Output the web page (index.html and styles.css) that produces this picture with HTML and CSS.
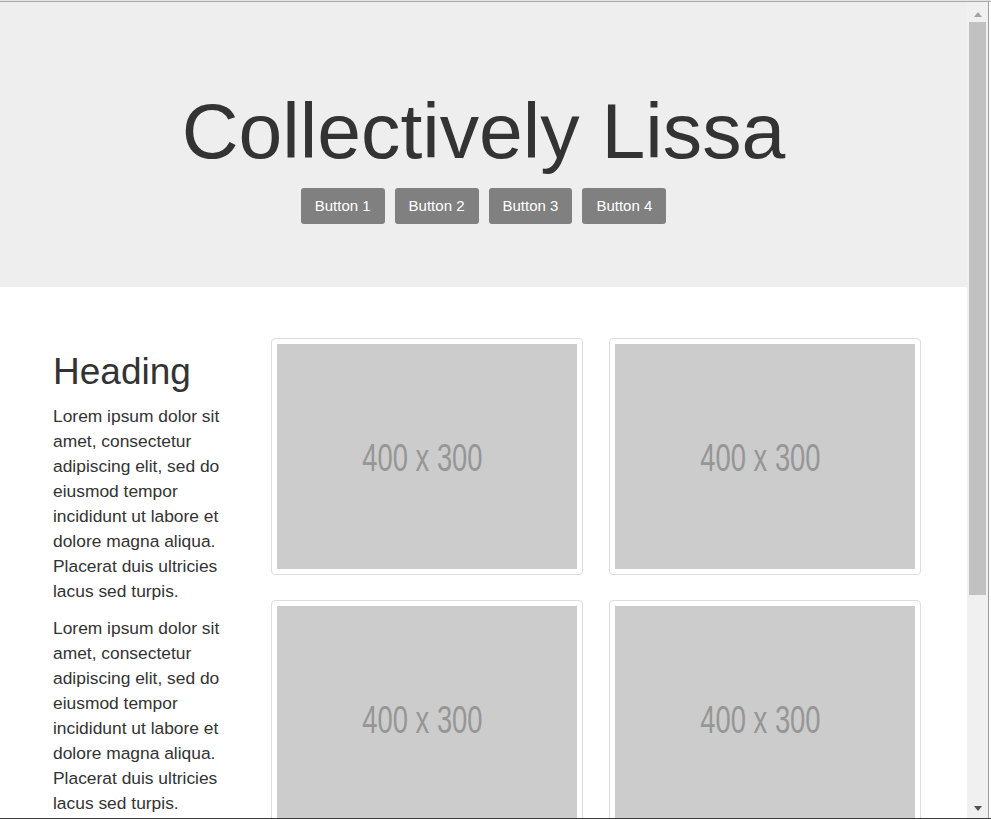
FILE: index.html
```html
<!DOCTYPE html>
<html>
<head>
<meta charset="utf-8">
<title>Collectively Lissa</title>
<link rel="stylesheet" href="styles.css">
</head>
<body>
<div class="topline"></div>
<div class="topborder"></div>
<div class="frame">
  <div class="page">
    <header class="hero">
      <h1 class="hero-title">Collectively Lissa</h1>
      <div class="hero-buttons">
        <a class="btn">Button 1</a>
        <a class="btn">Button 2</a>
        <a class="btn">Button 3</a>
        <a class="btn">Button 4</a>
      </div>
    </header>
    <section class="content">
      <div class="sidebar">
        <h2 class="sidebar-heading">Heading</h2>
        <p class="sidebar-text">Lorem ipsum dolor sit amet, consectetur adipiscing elit, sed do eiusmod tempor incididunt ut labore et dolore magna aliqua. Placerat duis ultricies lacus sed turpis.</p>
        <p class="sidebar-text">Lorem ipsum dolor sit amet, consectetur adipiscing elit, sed do eiusmod tempor incididunt ut labore et dolore magna aliqua. Placerat duis ultricies lacus sed turpis.</p>
      </div>
      <div class="gallery">
        <div class="thumb"><div class="placeholder"><span class="ph-text">400 x 300</span></div></div>
        <div class="thumb"><div class="placeholder"><span class="ph-text">400 x 300</span></div></div>
        <div class="thumb"><div class="placeholder"><span class="ph-text">400 x 300</span></div></div>
        <div class="thumb"><div class="placeholder"><span class="ph-text">400 x 300</span></div></div>
      </div>
    </section>
  </div>
  <div class="scrollbar">
    <div class="sb-arrow sb-up"></div>
    <div class="sb-thumb"></div>
    <div class="sb-fill"></div>
    <div class="sb-arrow sb-down"></div>
  </div>
  <div class="edge"></div>
  <div class="rest"></div>
</div>
<div class="bottomline"></div>
</body>
</html>
```
FILE: styles.css
```css
html, body {
  margin: 0;
  padding: 0;
  height: 819px;
  overflow: hidden;
  background: #ffffff;
  font-family: "Liberation Sans", Arial, sans-serif;
  color: #333333;
}

.topline {
  height: 1px;
  background: #e4e4e4;
}

.topborder {
  height: 1px;
  background: #a8a8a8;
}

.frame {
  display: flex;
  height: 816px;
}

.bottomline {
  height: 1px;
  background: #3c3c3c;
}

.page {
  width: 967px;
  flex: none;
  overflow: hidden;
}

.hero {
  background: #eeeeee;
  height: 285px;
  box-sizing: border-box;
  padding-top: 85px;
  text-align: center;
}

.hero-title {
  margin: 0;
  font-size: 78.7px;
  font-weight: normal;
  line-height: 88px;
  color: #333333;
}

.hero-buttons {
  display: flex;
  justify-content: center;
  gap: 10px;
  margin-top: 13px;
}

.btn {
  display: block;
  background: #808080;
  color: #ffffff;
  font-size: 15px;
  line-height: 20px;
  padding: 8px 14px;
  border-radius: 3px;
  cursor: pointer;
}

.content {
  display: flex;
  padding: 51px 0 0 53px;
}

.sidebar {
  width: 178px;
  margin-right: 40px;
  flex: none;
}

.sidebar-heading {
  margin: 14px 0 12px;
  font-size: 37px;
  font-weight: normal;
  line-height: 40px;
  color: #333333;
}

.sidebar-text {
  margin: 0 0 12px;
  font-size: 17.4px;
  line-height: 25px;
}

.gallery {
  display: grid;
  grid-template-columns: 312px 312px;
  column-gap: 26px;
  row-gap: 25px;
}

.thumb {
  border: 1px solid #dddddd;
  border-radius: 4px;
  padding: 5px;
  background: #ffffff;
}

.placeholder {
  width: 300px;
  height: 225px;
  background: #cccccc;
  display: flex;
  align-items: center;
  justify-content: center;
}

.ph-text {
  display: block;
  font-size: 38px;
  line-height: 38px;
  color: #969696;
  transform: scaleX(0.72);
  margin-right: 9px;
  margin-top: 3px;
  white-space: nowrap;
}

.scrollbar {
  width: 21px;
  flex: none;
  background: #f0f0f0;
  display: flex;
  flex-direction: column;
  align-items: center;
}

.sb-arrow {
  width: 0;
  height: 0;
  border-left: 4px solid transparent;
  border-right: 4px solid transparent;
}

.sb-up {
  margin-top: 10px;
  border-bottom: 5px solid #a3a3a3;
}

.sb-down {
  margin-bottom: 7px;
  border-top: 5px solid #505050;
}

.sb-thumb {
  margin-top: 5px;
  width: 17px;
  height: 573px;
  background: #c1c1c1;
}

.sb-fill {
  flex: 1;
}

.edge {
  width: 1px;
  flex: none;
  background: #a0a0a0;
}

.rest {
  width: 2px;
  flex: none;
  background: #ffffff;
}
```
